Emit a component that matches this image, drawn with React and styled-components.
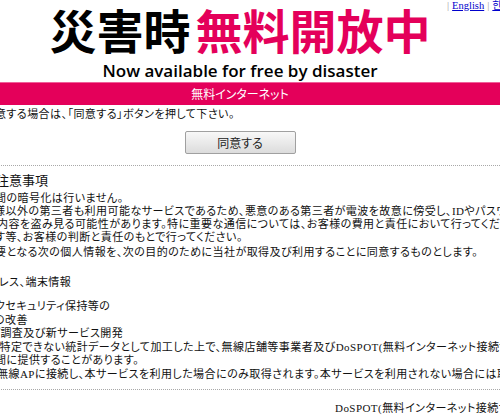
import React from "react";
import styled, { createGlobalStyle } from "styled-components";

const GlobalStyle = createGlobalStyle`
  html, body {
    margin: 0;
    padding: 0;
    background: #ffffff;
  }
  body {
    overflow: hidden;
  }
`;

const PINK = "#e4005a";

const Viewport = styled.div`
  width: 500px;
  height: 418px;
  overflow: hidden;
`;

// the page is wider than the window, so it is cut on both sides
const Page = styled.div`
  width: 740px;
  margin-left: -130px;
  font-family: "Liberation Serif", "Noto Sans CJK JP", serif;
  font-size: 11px;
  color: #111;
`;

const LangBar = styled.div`
  height: 6px;
  padding-left: 577px;
  font-family: "Liberation Serif", "Noto Sans CJK KR", serif;
  font-size: 10.5px;
  line-height: 11px;
  white-space: nowrap;
  color: #999;
  a {
    color: #0000cc;
    text-decoration: underline;
    margin: 0 3px;
  }
`;

const Title = styled.h1`
  margin: 0;
  text-align: center;
  font-family: "Noto Sans CJK JP", sans-serif;
  font-size: 47px;
  line-height: 45px;
  font-weight: 700;
  color: #000;
  white-space: nowrap;
`;

const Accent = styled.span`
  color: ${PINK};
  margin-left: 5px;
`;

const SubTitle = styled.p`
  margin: 10px 0 0;
  text-align: center;
  font-family: "Open Sans", "Liberation Sans", sans-serif;
  font-weight: 600;
  font-size: 17px;
  line-height: 20px;
  color: #000;
`;

const Bar = styled.div`
  margin-top: 1px;
  height: 22px;
  border-top: 1px solid #f0609a;
  background: ${PINK};
  color: #fff;
  text-align: center;
  font-family: "Noto Sans CJK JP", sans-serif;
  font-feature-settings: "palt";
  font-size: 12px;
  line-height: 22px;
`;

const Content = styled.div`
  padding-left: 125px;
`;

const Line = styled.div`
  margin-top: ${(p) => p.$top || 0}px;
  margin-left: ${(p) => p.$shift || 0}px;
  line-height: ${(p) => p.$lh || 13}px;
  white-space: nowrap;
  font-feature-settings: "palt";
  letter-spacing: 0.45px;
`;

const ButtonRow = styled.div`
  margin-top: 10px;
  display: flex;
  justify-content: center;
`;

const AgreeButton = styled.button`
  width: 111px;
  height: 23px;
  padding: 0;
  border: 1px solid #a0a0a0;
  border-radius: 2px;
  background: linear-gradient(#f8f8f8, #dcdcdc);
  font-family: "Noto Sans CJK JP", sans-serif;
  font-feature-settings: "palt";
  font-size: 12px;
  color: #222;
`;

const Rule = styled.hr`
  margin: ${(p) => p.$top}px 0 0;
  border: 0;
  border-top: 1px dotted #a8a8a8;
  height: 0;
`;

const Heading = styled.h2`
  margin: 7px 0 0 1px;
  font-weight: normal;
  font-size: 13px;
  line-height: 16px;
  white-space: nowrap;
  font-feature-settings: "palt";
`;

export default function App() {
  return (
    <Viewport>
      <GlobalStyle />
      <Page>
        <LangBar>
          |<a>English</a>|<a>한국어</a>|<a>简体中文</a>
        </LangBar>
        <Title>
          災害時<Accent>無料開放中</Accent>
        </Title>
        <SubTitle>Now available for free by disaster</SubTitle>
        <Bar>無料インターネット</Bar>
        <Content>
          <Line $top={2} $lh={14}>
            意する場合は、「同意する」ボタンを押して下さい。
          </Line>
        </Content>
        <ButtonRow>
          <AgreeButton>同意する</AgreeButton>
        </ButtonRow>
        <Rule $top={11} />
        <Content>
          <Heading>注意事項</Heading>
          <Line $top={3}>間の暗号化は行いません。</Line>
          <Line $shift={-1}>
            様以外の第三者も利用可能なサービスであるため、悪意のある第三者が電波を故意に傍受し、IDやパスワードなどの情報を
          </Line>
          <Line $shift={2}>
            内容を盗み見る可能性があります。特に重要な通信については、お客様の費用と責任において行ってください。
          </Line>
          <Line>す等、お客様の判断と責任のもとで行ってください。</Line>
          <Line $top={2}>
            要となる次の個人情報を、次の目的のために当社が取得及び利用することに同意するものとします。
          </Line>
          <Line $top={17} $shift={4}>
            レス、端末情報
          </Line>
          <Line $top={11} $lh={13.5}>
            クセキュリティ保持等の
          </Line>
          <Line $lh={13.5} $shift={-1}>
            の改善
          </Line>
          <Line $lh={13.5} $shift={-5}>
            グ調査及び新サービス開発
          </Line>
          <Line $lh={13.5} $shift={-6}>
            を特定できない統計データとして加工した上で、無線店舗等事業者及びDoSPOT(無料インターネット接続サービス)
          </Line>
          <Line $lh={13.5}>間に提供することがあります。</Line>
          <Line $lh={13.5} $shift={2}>
            無線APに接続し、本サービスを利用した場合にのみ取得されます。本サービスを利用されない場合には取得されません。
          </Line>
        </Content>
        <Rule $top={8} />
        <Content>
          <Line $top={11} $lh={14} $shift={340}>
            DoSPOT(無料インターネット接続サービス)
          </Line>
        </Content>
      </Page>
    </Viewport>
  );
}
